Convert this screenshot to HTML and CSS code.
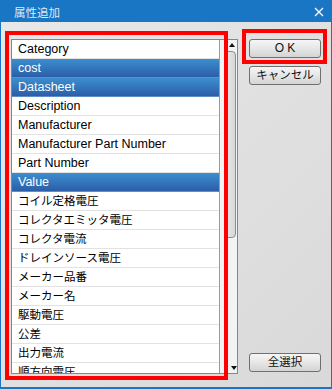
FILE: index.html
```html
<!DOCTYPE html>
<html>
<head>
  <title>属性追加</title>
  <link rel="stylesheet" href="styles.css">
</head>
<body>
  <div class="window">
    <div class="titlebar">
      <span class="title">属性追加</span>
      <svg class="close" width="10" height="10" viewBox="0 0 10 10">
        <path d="M1 1 L9 9 M9 1 L1 9" stroke="#fff" stroke-width="1.3" fill="none"/>
      </svg>
    </div>
    <div class="content">
      <div class="list-frame">
        <div class="listbox">
          <ul class="items">
            <li>Category</li>
            <li class="selected">cost</li>
            <li class="selected">Datasheet</li>
            <li>Description</li>
            <li>Manufacturer</li>
            <li>Manufacturer Part Number</li>
            <li>Part Number</li>
            <li class="selected">Value</li>
            <li class="ja">コイル定格電圧</li>
            <li class="ja">コレクタエミッタ電圧</li>
            <li class="ja">コレクタ電流</li>
            <li class="ja">ドレインソース電圧</li>
            <li class="ja">メーカー品番</li>
            <li class="ja">メーカー名</li>
            <li class="ja">駆動電圧</li>
            <li class="ja">公差</li>
            <li class="ja">出力電流</li>
            <li class="ja">順方向電圧</li>
          </ul>
          <div class="scrollbar">
            <span class="arrow up"></span>
            <div class="thumb"></div>
            <span class="arrow down"></span>
          </div>
        </div>
      </div>
      <div class="side">
        <div class="ok-frame">
          <button class="btn">O K</button>
        </div>
        <button class="btn ja cancel">キャンセル</button>
        <div class="spacer"></div>
        <button class="btn ja">全選択</button>
      </div>
    </div>
  </div>
</body>
</html>
```
FILE: styles.css
```css
body {
  margin: 0;
  font-family: "Liberation Sans", "Noto Sans CJK JP", sans-serif;
  font-size: 12px;
}
.window {
  width: 332px;
  height: 389px;
  box-sizing: border-box;
  border-left: 1px solid #1976c4;
  border-right: 1px solid #1976c4;
  border-bottom: 2px solid #1976c4;
  background: linear-gradient(135deg, #e8e8e8, #d9d9d9);
  display: flex;
  flex-direction: column;
}
.titlebar {
  height: 22px;
  box-sizing: border-box;
  margin: 0 -1px;
  background-color: #1976c4;
  display: flex;
  align-items: center;
  justify-content: space-between;
  padding: 1px 8px 0 14px;
}
.title {
  color: #dfeaf6;
  font-family: "Noto Sans CJK JP", sans-serif;
  font-size: 11.5px;
}
.content {
  flex: 1;
  display: flex;
  padding: 17px 10px 0 10px;
}
.list-frame {
  position: relative;
  height: 335px;
}
.list-frame::after {
  content: "";
  position: absolute;
  top: -8px;
  left: -6px;
  right: 10px;
  bottom: -6px;
  border: 4px solid #f00;
}
.listbox {
  width: 227px;
  height: 335px;
  box-sizing: border-box;
  border: 1px solid #828790;
  background-color: #fff;
  display: flex;
  overflow: hidden;
}
.items {
  list-style: none;
  margin: 0;
  padding: 0;
  width: 207px;
}
.items li {
  height: 18px;
  line-height: 19px;
  border-bottom: 1px solid #e2e2e2;
  padding-left: 6px;
  color: #000;
  white-space: nowrap;
  font-size: 12.5px;
}
.items li.ja {
  font-size: 11.5px;
  line-height: 18px;
}
.items li.selected {
  background: linear-gradient(#3b8ecf, #2c5ea8);
  border-bottom-color: #5f8fc4;
  color: #fff;
}
.scrollbar {
  width: 18px;
  box-sizing: border-box;
  border-left: 1px solid #9a9a9a;
  background-color: #f3f3f3;
  display: flex;
  flex-direction: column;
  align-items: center;
  padding: 3px 0 3px 2px;
}
.arrow {
  width: 0;
  height: 0;
  border-left: 3px solid transparent;
  border-right: 3px solid transparent;
}
.arrow.up {
  border-bottom: 4px solid #111;
  margin-left: 4px;
}
.arrow.down {
  border-top: 4px solid #111;
  margin-left: 8px;
  margin-top: auto;
}
.thumb {
  width: 12px;
  height: 187px;
  box-sizing: border-box;
  margin-top: 4px;
  border: 1px solid #8e8e8e;
  border-radius: 4px;
  background: linear-gradient(90deg, #ececec, #d6d6d6);
}
.side {
  display: flex;
  flex-direction: column;
  margin-left: 11px;
  width: 72px;
  padding-bottom: 15px;
}
.ok-frame {
  position: relative;
}
.ok-frame::after {
  content: "";
  position: absolute;
  top: -10px;
  left: -7px;
  right: -6px;
  bottom: -6px;
  border: 4px solid #f00;
}
.btn {
  width: 72px;
  height: 19px;
  padding: 0;
  border: 1px solid #6f6f6f;
  border-radius: 3px;
  background: linear-gradient(#f6f6f6, #e6e6e6 50%, #d4d4d4);
  font-family: "Liberation Sans", "Noto Sans CJK JP", sans-serif;
  font-size: 12px;
  color: #111;
  line-height: 17px;
}
.btn.ja {
  font-size: 11.5px;
}
.cancel {
  margin-top: 8px;
}
.spacer {
  flex: 1;
}
```
